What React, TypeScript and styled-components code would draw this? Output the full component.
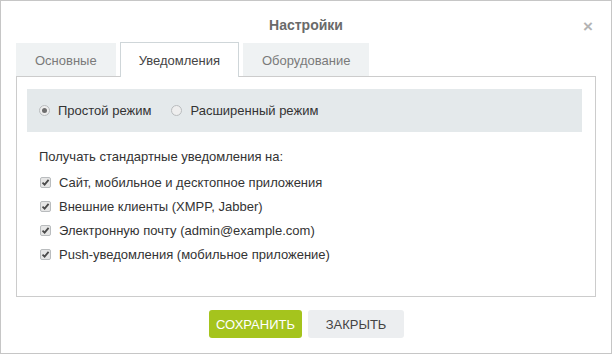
import styled, { createGlobalStyle } from "styled-components";

const GlobalStyle = createGlobalStyle`
  html, body {
    margin: 0;
    padding: 0;
    background: #ffffff;
  }
  body {
    font-family: "Liberation Sans", Arial, sans-serif;
    color: #333333;
  }
`;

const Dialog = styled.div`
  box-sizing: border-box;
  width: 612px;
  height: 354px;
  border: 1px solid #c6c6c6;
  background: #ffffff;
  display: flex;
  flex-direction: column;
`;

const Header = styled.div`
  position: relative;
  height: 41px;
  display: flex;
  align-items: center;
  justify-content: center;
`;

const Title = styled.h1`
  margin: 0;
  padding-top: 6px;
  font-size: 14px;
  font-weight: bold;
  color: #6a6a6a;
`;

const Close = styled.span`
  position: absolute;
  right: 18px;
  top: 17px;
  font-size: 17px;
  font-weight: bold;
  color: #b4b4b4;
  line-height: 1;
`;

const Tabs = styled.div`
  display: flex;
  gap: 4px;
  padding-left: 15px;
  position: relative;
  z-index: 1;
`;

const Tab = styled.div<{ $active?: boolean }>`
  box-sizing: border-box;
  padding: 0 18px;
  display: flex;
  align-items: center;
  font-size: 13px;
  color: ${(p) => (p.$active ? "#444444" : "#7a7a7a")};
  background: ${(p) => (p.$active ? "#ffffff" : "#eff2f3")};
  border: 1px solid ${(p) => (p.$active ? "#cfd6d9" : "transparent")};
  border-bottom: none;
  margin-top: ${(p) => (p.$active ? "0" : "1px")};
  height: ${(p) => (p.$active ? "35px" : "33px")};
`;

const Panel = styled.div`
  box-sizing: border-box;
  margin: -1px 15px 0 15px;
  height: 221px;
  border: 1px solid #cccccc;
  padding: 12px 13px 0 10px;
`;

const ModeBar = styled.div`
  height: 43px;
  background: #e4e9eb;
  display: flex;
  align-items: center;
  padding-left: 12px;
  gap: 20px;
  font-size: 13px;
  color: #333333;
`;

const Option = styled.label`
  display: flex;
  align-items: center;
  gap: 8px;
`;

const Radio = styled.span<{ $checked?: boolean }>`
  box-sizing: border-box;
  width: 11px;
  height: 11px;
  border-radius: 50%;
  border: 1px solid #b9bcbe;
  background: #eeeeee;
  display: flex;
  align-items: center;
  justify-content: center;
  &::after {
    content: "";
    width: 5px;
    height: 5px;
    border-radius: 50%;
    background: ${(p) => (p.$checked ? "#6e6e6e" : "transparent")};
  }
`;

const Body = styled.div`
  padding: 16px 0 0 12px;
  font-size: 13px;
  color: #333333;
`;

const Lead = styled.div`
  height: 18px;
  line-height: 18px;
  margin-bottom: 4px;
`;

const CheckRow = styled.label`
  display: flex;
  align-items: center;
  gap: 8px;
  height: 24px;
  padding-left: 1px;
`;

const CheckBox = styled.span`
  box-sizing: border-box;
  width: 11px;
  height: 11px;
  border: 1px solid #b9bcbe;
  border-radius: 2px;
  background: #e6e6e6;
  display: flex;
  align-items: center;
  justify-content: center;
`;

const Footer = styled.div`
  display: flex;
  justify-content: center;
  gap: 6px;
  padding-top: 13px;
  padding-left: 1px;
`;

const Button = styled.button<{ $primary?: boolean }>`
  height: 28px;
  border: none;
  border-radius: 3px;
  padding: 0;
  width: ${(p) => (p.$primary ? "93px" : "96px")};
  font-family: "Liberation Sans", Arial, sans-serif;
  font-size: 13px;
  color: ${(p) => (p.$primary ? "#ffffff" : "#444444")};
  background: ${(p) => (p.$primary ? "#a5c41d" : "#eceef0")};
`;

const Check = () => (
  <CheckBox>
    <svg width="9" height="9" viewBox="0 0 9 9">
      <path d="M1.5 4.6 L3.6 6.6 L7.6 1.8" fill="none" stroke="#4a4a4a" strokeWidth="1.8" />
    </svg>
  </CheckBox>
);

const channels = [
  "Сайт, мобильное и десктопное приложения",
  "Внешние клиенты (XMPP, Jabber)",
  "Электронную почту (admin@example.com)",
  "Push-уведомления (мобильное приложение)",
];

export default function App() {
  return (
    <>
      <GlobalStyle />
      <Dialog>
        <Header>
          <Title>Настройки</Title>
          <Close>×</Close>
        </Header>
        <Tabs>
          <Tab>Основные</Tab>
          <Tab $active>Уведомления</Tab>
          <Tab>Оборудование</Tab>
        </Tabs>
        <Panel>
          <ModeBar>
            <Option>
              <Radio $checked />
              Простой режим
            </Option>
            <Option>
              <Radio />
              Расширенный режим
            </Option>
          </ModeBar>
          <Body>
            <Lead>Получать стандартные уведомления на:</Lead>
            {channels.map((c) => (
              <CheckRow key={c}>
                <Check />
                {c}
              </CheckRow>
            ))}
          </Body>
        </Panel>
        <Footer>
          <Button $primary>СОХРАНИТЬ</Button>
          <Button>ЗАКРЫТЬ</Button>
        </Footer>
      </Dialog>
    </>
  );
}
